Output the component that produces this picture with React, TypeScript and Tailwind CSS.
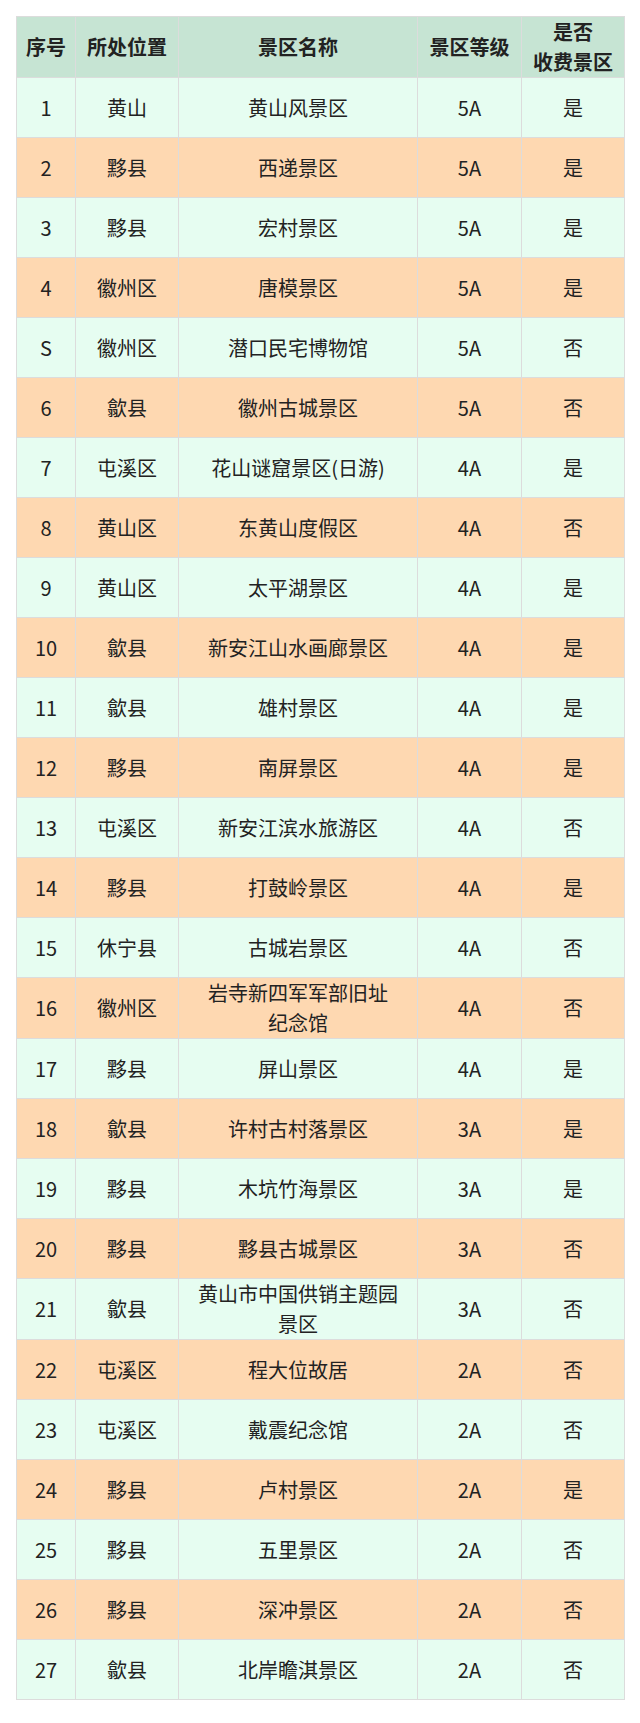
const rows: [string, string, string, string, string][] = [
  ["1", "黄山", "黄山风景区", "5A", "是"],
  ["2", "黟县", "西递景区", "5A", "是"],
  ["3", "黟县", "宏村景区", "5A", "是"],
  ["4", "徽州区", "唐模景区", "5A", "是"],
  ["S", "徽州区", "潜口民宅博物馆", "5A", "否"],
  ["6", "歙县", "徽州古城景区", "5A", "否"],
  ["7", "屯溪区", "花山谜窟景区(日游)", "4A", "是"],
  ["8", "黄山区", "东黄山度假区", "4A", "否"],
  ["9", "黄山区", "太平湖景区", "4A", "是"],
  ["10", "歙县", "新安江山水画廊景区", "4A", "是"],
  ["11", "歙县", "雄村景区", "4A", "是"],
  ["12", "黟县", "南屏景区", "4A", "是"],
  ["13", "屯溪区", "新安江滨水旅游区", "4A", "否"],
  ["14", "黟县", "打鼓岭景区", "4A", "是"],
  ["15", "休宁县", "古城岩景区", "4A", "否"],
  ["16", "徽州区", "岩寺新四军军部旧址\n纪念馆", "4A", "否"],
  ["17", "黟县", "屏山景区", "4A", "是"],
  ["18", "歙县", "许村古村落景区", "3A", "是"],
  ["19", "黟县", "木坑竹海景区", "3A", "是"],
  ["20", "黟县", "黟县古城景区", "3A", "否"],
  ["21", "歙县", "黄山市中国供销主题园\n景区", "3A", "否"],
  ["22", "屯溪区", "程大位故居", "2A", "否"],
  ["23", "屯溪区", "戴震纪念馆", "2A", "否"],
  ["24", "黟县", "卢村景区", "2A", "是"],
  ["25", "黟县", "五里景区", "2A", "否"],
  ["26", "黟县", "深冲景区", "2A", "否"],
  ["27", "歙县", "北岸瞻淇景区", "2A", "否"],
];

const cell = "border border-[#dcdcdc] text-center align-middle p-0";

export default function App() {
  return (
    <div
      className="bg-white min-h-screen px-4 pt-4 pb-6 text-[#222] text-[20px] leading-[30px]"
      style={{ fontFamily: '"Noto Sans CJK SC", "Noto Sans", sans-serif' }}
    >
      <table className="w-[608px] border-collapse table-fixed">
        <colgroup>
          <col className="w-[59px]" />
          <col className="w-[103px]" />
          <col className="w-[239px]" />
          <col className="w-[104px]" />
          <col className="w-[103px]" />
        </colgroup>
        <thead>
          <tr className="h-[60px] bg-[#c6e4d3] font-bold">
            <th className={cell}>序号</th>
            <th className={cell}>所处位置</th>
            <th className={cell}>景区名称</th>
            <th className={cell}>景区等级</th>
            <th className={cell}>
              是否
              <br />
              收费景区
            </th>
          </tr>
        </thead>
        <tbody>
          {rows.map((r, i) => (
            <tr
              key={i}
              className={`h-[60px] ${i % 2 === 0 ? "bg-[#e6fdf1]" : "bg-[#fed8b1]"}`}
            >
              <td className={cell}>{r[0]}</td>
              <td className={cell}>{r[1]}</td>
              <td className={`${cell} whitespace-pre-line`}>{r[2]}</td>
              <td className={cell}>{r[3]}</td>
              <td className={cell}>{r[4]}</td>
            </tr>
          ))}
        </tbody>
      </table>
    </div>
  );
}
